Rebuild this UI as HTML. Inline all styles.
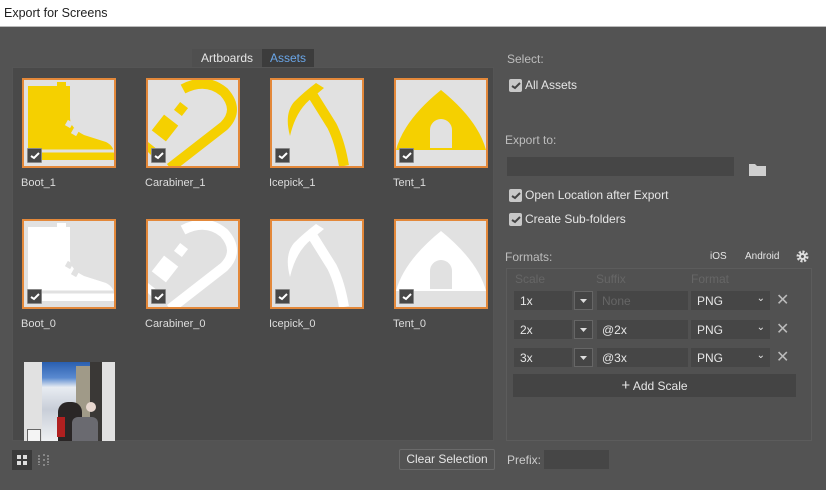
<!DOCTYPE html>
<html><head><style>
*{box-sizing:border-box;margin:0;padding:0}
body{width:826px;height:490px;background:#535353;font-family:"Liberation Sans",sans-serif;font-size:12px;color:#e6e6e6;position:relative;overflow:hidden}
.a{position:absolute}
.title{left:0;top:0;width:826px;height:27px;background:#fff;color:#222;font-size:12.5px;padding:6px 4px;border-bottom:1px solid #bbb}
.panel{left:12px;top:67px;width:482px;height:374px;background:#494949;border:1px solid #555}
.th{width:94px;height:90px;border:2px solid #e3883a;background:#e1e1e1;overflow:hidden}
.cb{width:15px;height:15px;background:#474747;border:1px solid #888;border-radius:1px}
.cb svg{display:block}
.lbl{font-size:11px;color:#ddd}
.inp{background:#464646}
.rc{width:13px;height:13px;background:#c8c8c8;border-radius:2px}
</style></head><body>
<div class="a title">Export for Screens</div>
<div class="a" style="left:192px;top:49px;width:70px;height:18px;background:#4f4f4f;text-align:center;line-height:18px">Artboards</div>
<div class="a" style="left:262px;top:49px;width:52px;height:18px;background:#3c3c3c;color:#6aa6e8;text-align:center;line-height:18px">Assets</div>
<div class="a panel"></div>

<!-- row1 -->
<div class="a th" style="left:22px;top:78px"><svg width="90" height="86" viewBox="0 0 90 86"><path d="M4 6H33V2H42V6H46V38Q46 48 60 55L82 62Q90 66 90 74V80H4Z" fill="#f5d000"/><path d="M4 71H90" stroke="#e1e1e1" stroke-width="3"/><rect x="42" y="41" width="6" height="6" fill="#e1e1e1" transform="rotate(30 45 44)"/><rect x="48" y="49" width="6" height="6" fill="#e1e1e1" transform="rotate(30 51 52)"/></svg></div>
<div class="a th" style="left:146px;top:78px"><svg width="90" height="86" viewBox="0 0 90 86"><path d="M35 9Q58 -3 76 12Q92 30 76 46L22 88" stroke="#f5d000" stroke-width="10" fill="none"/><rect x="8" y="38" width="18" height="20" fill="#f5d000" transform="rotate(38 17 48)"/><rect x="28" y="24" width="10" height="10" fill="#f5d000" transform="rotate(38 33 29)"/><path d="M0 62L10 70L4 76L0 72Z" fill="#f5d000"/></svg></div>
<div class="a th" style="left:270px;top:78px"><svg width="90" height="86" viewBox="0 0 90 86"><path d="M44 3L52 8L40 18Q24 30 18 56Q12 34 22 22Q32 12 44 3Z" fill="#f5d000"/><path d="M40 14L60 46Q68 62 72 86" stroke="#f5d000" stroke-width="10" fill="none"/></svg></div>
<div class="a th" style="left:394px;top:78px"><svg width="90" height="86" viewBox="0 0 90 86"><path d="M0 70Q8 40 45 10Q82 40 90 70Z" fill="#f5d000"/><path d="M34 68V50a11 11 0 0 1 22 0v18z" fill="#e1e1e1"/></svg></div>
<!-- row2 -->
<div class="a th" style="left:22px;top:219px"><svg width="90" height="86" viewBox="0 0 90 86"><path d="M4 6H33V2H42V6H46V38Q46 48 60 55L82 62Q90 66 90 74V80H4Z" fill="#fff"/><path d="M4 71H90" stroke="#e1e1e1" stroke-width="3"/><rect x="42" y="41" width="6" height="6" fill="#e1e1e1" transform="rotate(30 45 44)"/><rect x="48" y="49" width="6" height="6" fill="#e1e1e1" transform="rotate(30 51 52)"/></svg></div>
<div class="a th" style="left:146px;top:219px"><svg width="90" height="86" viewBox="0 0 90 86"><path d="M35 9Q58 -3 76 12Q92 30 76 46L22 88" stroke="#fff" stroke-width="10" fill="none"/><rect x="8" y="38" width="18" height="20" fill="#fff" transform="rotate(38 17 48)"/><rect x="28" y="24" width="10" height="10" fill="#fff" transform="rotate(38 33 29)"/><path d="M0 62L10 70L4 76L0 72Z" fill="#fff"/></svg></div>
<div class="a th" style="left:270px;top:219px"><svg width="90" height="86" viewBox="0 0 90 86"><path d="M44 3L52 8L40 18Q24 30 18 56Q12 34 22 22Q32 12 44 3Z" fill="#fff"/><path d="M40 14L60 46Q68 62 72 86" stroke="#fff" stroke-width="10" fill="none"/></svg></div>
<div class="a th" style="left:394px;top:219px"><svg width="90" height="86" viewBox="0 0 90 86"><path d="M0 70Q8 40 45 10Q82 40 90 70Z" fill="#fff"/><path d="M34 68V50a11 11 0 0 1 22 0v18z" fill="#e1e1e1"/></svg></div>
<!-- checkboxes -->
<div class="a cb" style="left:27px;top:148px"><svg width="13" height="13"><path d="M3 7l3 2 5-5" stroke="#fff" stroke-width="2" fill="none"/></svg></div>
<div class="a cb" style="left:151px;top:148px"><svg width="13" height="13"><path d="M3 7l3 2 5-5" stroke="#fff" stroke-width="2" fill="none"/></svg></div>
<div class="a cb" style="left:275px;top:148px"><svg width="13" height="13"><path d="M3 7l3 2 5-5" stroke="#fff" stroke-width="2" fill="none"/></svg></div>
<div class="a cb" style="left:399px;top:148px"><svg width="13" height="13"><path d="M3 7l3 2 5-5" stroke="#fff" stroke-width="2" fill="none"/></svg></div>
<div class="a cb" style="left:27px;top:289px"><svg width="13" height="13"><path d="M3 7l3 2 5-5" stroke="#fff" stroke-width="2" fill="none"/></svg></div>
<div class="a cb" style="left:151px;top:289px"><svg width="13" height="13"><path d="M3 7l3 2 5-5" stroke="#fff" stroke-width="2" fill="none"/></svg></div>
<div class="a cb" style="left:275px;top:289px"><svg width="13" height="13"><path d="M3 7l3 2 5-5" stroke="#fff" stroke-width="2" fill="none"/></svg></div>
<div class="a cb" style="left:399px;top:289px"><svg width="13" height="13"><path d="M3 7l3 2 5-5" stroke="#fff" stroke-width="2" fill="none"/></svg></div>
<div class="a lbl" style="left:21px;top:177px">Boot_1</div>
<div class="a lbl" style="left:145px;top:177px">Carabiner_1</div>
<div class="a lbl" style="left:269px;top:177px">Icepick_1</div>
<div class="a lbl" style="left:393px;top:177px">Tent_1</div>
<div class="a lbl" style="left:21px;top:318px">Boot_0</div>
<div class="a lbl" style="left:145px;top:318px">Carabiner_0</div>
<div class="a lbl" style="left:269px;top:318px">Icepick_0</div>
<div class="a lbl" style="left:393px;top:318px">Tent_0</div>
<!-- photo -->
<div class="a" style="left:24px;top:362px;width:91px;height:79px;background:#e1e1e1;overflow:hidden">
<div class="a" style="left:18px;top:0;width:60px;height:79px;background:linear-gradient(180deg,#2a5fb0 0,#5a8ad0 20%,#e8ecf2 32%,#c8ced8 60%,#eef0f2 100%)"></div>
<div class="a" style="left:52px;top:4px;width:24px;height:55px;background:#a09a88"></div>
<div class="a" style="left:66px;top:0;width:12px;height:79px;background:#3a3836"></div>
<div class="a" style="left:34px;top:40px;width:24px;height:39px;background:#2a2626;border-radius:10px 10px 0 0"></div>
<div class="a" style="left:48px;top:55px;width:26px;height:24px;background:#6a6a70;border-radius:6px 6px 0 0"></div>
<div class="a" style="left:33px;top:55px;width:8px;height:20px;background:#b02020"></div>
<div class="a" style="left:62px;top:40px;width:10px;height:10px;background:#e8d8d0;border-radius:50%"></div>
<div class="a" style="left:3px;top:67px;width:14px;height:14px;border:1px solid #666;background:#f4f4f4"></div>
</div>
<!-- bottom left -->
<div class="a" style="left:12px;top:450px;width:20px;height:20px;background:#3a3a3a"><svg width="20" height="20"><rect x="5" y="5" width="4" height="4" fill="#ddd"/><rect x="11" y="5" width="4" height="4" fill="#ddd"/><rect x="5" y="11" width="4" height="4" fill="#ddd"/><rect x="11" y="11" width="4" height="4" fill="#ddd"/></svg></div>
<div class="a" style="left:34px;top:450px;width:20px;height:20px"><svg width="20" height="20" stroke="#bbb" stroke-dasharray="2 1"><path d="M5 5v10M9 5h2M9 10h2M9 15h2M14 5v10"/></svg></div>
<div class="a" style="left:399px;top:449px;width:96px;height:21px;border:1px solid #6a6a6a;border-radius:2px;text-align:center;line-height:19px;font-size:12px">Clear Selection</div>
<!-- right -->
<div class="a" style="left:507px;top:52px;color:#bdbdbd">Select:</div>
<div class="a rc" style="left:509px;top:79px"><svg width="13" height="13"><path d="M3 7l3 2 5-5" stroke="#444" stroke-width="2" fill="none"/></svg></div>
<div class="a" style="left:525px;top:78px">All Assets</div>
<div class="a" style="left:505px;top:133px;color:#bdbdbd">Export to:</div>
<div class="a inp" style="left:507px;top:157px;width:227px;height:19px"></div>
<svg class="a" style="left:749px;top:163px" width="17" height="13"><path d="M0 1h6l2 2h9v10H0z" fill="#cfcfcf"/></svg>
<div class="a rc" style="left:509px;top:189px"><svg width="13" height="13"><path d="M3 7l3 2 5-5" stroke="#444" stroke-width="2" fill="none"/></svg></div>
<div class="a" style="left:525px;top:188px">Open Location after Export</div>
<div class="a rc" style="left:509px;top:213px"><svg width="13" height="13"><path d="M3 7l3 2 5-5" stroke="#444" stroke-width="2" fill="none"/></svg></div>
<div class="a" style="left:525px;top:212px">Create Sub-folders</div>
<div class="a" style="left:505px;top:250px;color:#bdbdbd">Formats:</div>
<div class="a" style="left:710px;top:251px;font-size:10px">iOS</div>
<div class="a" style="left:745px;top:251px;font-size:10px">Android</div>
<svg class="a" style="left:796px;top:250px" width="13" height="13" viewBox="0 0 13 13"><circle cx="6.5" cy="6.5" r="4.5" fill="none" stroke="#ddd" stroke-width="3" stroke-dasharray="2 1.5"/><circle cx="6.5" cy="6.5" r="3.5" fill="#ddd"/><circle cx="6.5" cy="6.5" r="1.5" fill="#535353"/></svg>
<div class="a" style="left:506px;top:268px;width:306px;height:173px;border:1px solid #5c5c5c;background:#515151"></div>
<div class="a" style="left:515px;top:272px;color:#666">Scale</div>
<div class="a" style="left:596px;top:272px;color:#666">Suffix</div>
<div class="a" style="left:691px;top:272px;color:#666">Format</div>

<div class="a inp" style="left:514px;top:291px;width:58px;height:19px;padding:3px 6px">1x</div>
<div class="a" style="left:574px;top:291px;width:19px;height:19px;border:1px solid #666;background:#454545"><svg width="17" height="17"><path d="M5 7h7l-3.5 4z" fill="#ddd"/></svg></div>
<div class="a inp" style="left:597px;top:291px;width:91px;height:19px;padding:3px 5px;color:#666">None</div>
<div class="a inp" style="left:691px;top:291px;width:79px;height:19px;padding:3px 6px">PNG<span style="position:absolute;right:5px;top:2px;font-size:10px">⌄</span></div>
<div class="a" style="left:776px;top:290px;font-size:16px;color:#bbb">✕</div>

<div class="a inp" style="left:514px;top:320px;width:58px;height:19px;padding:3px 6px">2x</div>
<div class="a" style="left:574px;top:320px;width:19px;height:19px;border:1px solid #666;background:#454545"><svg width="17" height="17"><path d="M5 7h7l-3.5 4z" fill="#ddd"/></svg></div>
<div class="a inp" style="left:597px;top:320px;width:91px;height:19px;padding:3px 5px">@2x</div>
<div class="a inp" style="left:691px;top:320px;width:79px;height:19px;padding:3px 6px">PNG<span style="position:absolute;right:5px;top:2px;font-size:10px">⌄</span></div>
<div class="a" style="left:776px;top:319px;font-size:16px;color:#bbb">✕</div>

<div class="a inp" style="left:514px;top:348px;width:58px;height:19px;padding:3px 6px">3x</div>
<div class="a" style="left:574px;top:348px;width:19px;height:19px;border:1px solid #666;background:#454545"><svg width="17" height="17"><path d="M5 7h7l-3.5 4z" fill="#ddd"/></svg></div>
<div class="a inp" style="left:597px;top:348px;width:91px;height:19px;padding:3px 5px">@3x</div>
<div class="a inp" style="left:691px;top:348px;width:79px;height:19px;padding:3px 6px">PNG<span style="position:absolute;right:5px;top:2px;font-size:10px">⌄</span></div>
<div class="a" style="left:776px;top:347px;font-size:16px;color:#bbb">✕</div>

<div class="a" style="left:513px;top:374px;width:283px;height:23px;background:#444;text-align:center;line-height:23px"><b style="font-size:15px;font-weight:normal">+</b> Add Scale</div>
<div class="a" style="left:507px;top:453px;color:#ccc">Prefix:</div>
<div class="a inp" style="left:544px;top:450px;width:65px;height:19px"></div>
</body></html>
